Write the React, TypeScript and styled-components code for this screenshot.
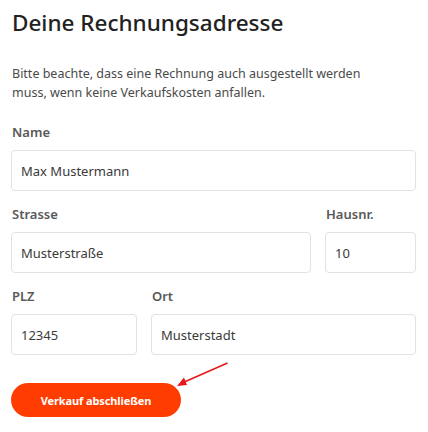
import React from "react";
import styled, { createGlobalStyle } from "styled-components";

const Global = createGlobalStyle`
  html, body { margin: 0; padding: 0; background: #fff; }
  body { font-family: "Noto Sans", "Open Sans", sans-serif; }
  * { box-sizing: border-box; }
`;

const Page = styled.div`
  width: 428px;
  height: 432px;
  padding: 7px 12px 0 11px;
  position: relative;
  overflow: hidden;
`;

const Title = styled.h1`
  margin: 0;
  font-size: 22.5px;
  font-weight: 500;
  color: #222;
  line-height: 32px;
  padding-left: 1px;
`;

const Intro = styled.p`
  margin: 25px 0 0 1px;
  font-size: 12.5px;
  line-height: 19px;
  color: #4a4a4a;
  width: 380px;
`;

const Form = styled.div`
  margin-top: 21px;
  display: flex;
  flex-direction: column;
  gap: 14px;
`;

const Row = styled.div`
  display: flex;
  gap: 14px;
`;

const Field = styled.div<{ $w?: number }>`
  display: flex;
  flex-direction: column;
  gap: 9px;
  ${(p) => (p.$w ? `width: ${p.$w}px; flex: none;` : `flex: 1;`)}
`;

const Label = styled.label`
  font-size: 13px;
  font-weight: 600;
  color: #585858;
  line-height: 18px;
  padding-left: 1px;
`;

const Input = styled.div`
  height: 41px;
  border: 1px solid #e2e2e2;
  border-radius: 4px;
  padding: 0 9px;
  display: flex;
  align-items: center;
  font-size: 13px;
  color: #3a3a3a;
`;

const Button = styled.button`
  margin-top: 28px;
  width: 170px;
  height: 34px;
  border: none;
  border-radius: 17px;
  background: #ff3d00;
  color: #fff;
  font-family: "Noto Sans", sans-serif;
  font-weight: 700;
  font-size: 11px;
  letter-spacing: -0.1px;
  cursor: pointer;
`;

const Arrow = styled.svg`
  position: absolute;
  left: 170px;
  top: 358px;
`;

export default function App() {
  return (
    <Page>
      <Global />
      <Title>Deine Rechnungsadresse</Title>
      <Intro>
        Bitte beachte, dass eine Rechnung auch ausgestellt werden muss, wenn keine
        Verkaufskosten anfallen.
      </Intro>
      <Form>
        <Field>
          <Label>Name</Label>
          <Input>Max Mustermann</Input>
        </Field>
        <Row>
          <Field>
            <Label>Strasse</Label>
            <Input>Musterstraße</Input>
          </Field>
          <Field $w={91}>
            <Label>Hausnr.</Label>
            <Input>10</Input>
          </Field>
        </Row>
        <Row>
          <Field $w={126}>
            <Label>PLZ</Label>
            <Input>12345</Input>
          </Field>
          <Field>
            <Label>Ort</Label>
            <Input>Musterstadt</Input>
          </Field>
        </Row>
      </Form>
      <Button>Verkauf abschließen</Button>
      <Arrow width="64" height="34" viewBox="0 0 64 34">
        <line x1="57.5" y1="5" x2="12" y2="25" stroke="#e8161b" strokeWidth="1.6" />
        <polygon points="7,28 14,19.5 17,27" fill="#e8161b" />
      </Arrow>
    </Page>
  );
}
